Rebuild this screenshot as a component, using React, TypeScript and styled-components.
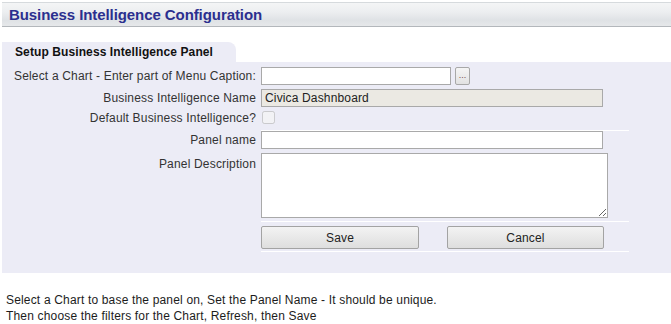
import React from "react";
import styled, { createGlobalStyle } from "styled-components";

const Global = createGlobalStyle`
  html, body { margin: 0; padding: 0; background: #ffffff; }
  body { font-family: Arial, "Liberation Sans", sans-serif; font-size: 12px; color: #222; }
`;

const Page = styled.div`
  padding: 2px 0 0 2px;
  width: 669px;
`;

const Header = styled.div`
  height: 23px;
  border-top: 1px solid #d6dadd;
  border-bottom: 1px solid #b3b7bb;
  background: linear-gradient(to bottom, #f4f5f6 0%, #eceef0 40%, #dfe2e5 75%, #e6e8ea 100%);
  display: flex;
  align-items: center;
  padding-left: 7px;
`;

const Title = styled.h1`
  margin: 0;
  font-size: 15px;
  font-weight: bold;
  letter-spacing: -0.08px;
  color: #2b2f8f;
  font-family: Arial, "Liberation Sans", sans-serif;
`;

const TabRow = styled.div`
  margin-top: 15px;
  display: flex;
`;

const Tab = styled.div`
  width: 234px;
  height: 20px;
  background: #ececf6;
  border-top-right-radius: 8px;
  box-sizing: border-box;
  padding-left: 13px;
  display: flex;
  align-items: center;
  font-weight: bold;
  font-size: 12px;
  letter-spacing: 0.1px;
  color: #111;
`;

const Panel = styled.div`
  background: #ececf6;
  height: 211px;
  box-sizing: border-box;
  padding-top: 3px;
`;

const Row = styled.div<{ $pt: number; $pb: number; $line?: boolean }>`
  display: grid;
  grid-template-columns: 254px 368px;
  column-gap: 5px;
  & > div:last-child {
    padding-top: ${(p) => p.$pt}px;
    padding-bottom: ${(p) => p.$pb}px;
    border-bottom: ${(p) => (p.$line ? "1px solid #ffffff" : "0")};
    display: flex;
    align-items: flex-start;
  }
`;

const Label = styled.div<{ $pt: number }>`
  text-align: right;
  padding-top: ${(p) => p.$pt}px;
  line-height: 18px;
  color: #333;
  letter-spacing: 0.18px;
  white-space: nowrap;
`;

const Field = styled.div``;

const TextInput = styled.input<{ $w: number }>`
  box-sizing: border-box;
  width: ${(p) => p.$w}px;
  height: 18px;
  margin: 0;
  padding: 0 3px;
  border: 1px solid #a9a9a9;
  background: #ffffff;
  font-family: Arial, "Liberation Sans", sans-serif;
  font-size: 12px;
  letter-spacing: 0.15px;
  color: #222;
  outline: none;
  &:disabled {
    background: #ebe9e3;
    color: #222;
  }
`;

const DotsButton = styled.button`
  box-sizing: border-box;
  width: 15px;
  height: 18px;
  margin: 0 0 0 4px;
  padding: 0 0 4px 0;
  border: 1px solid #a8a8a8;
  border-radius: 2px;
  background: linear-gradient(#f5f5f5, #e2e2e2);
  font-size: 9px;
  line-height: 9px;
  color: #7a4a4a;
  font-family: Arial, "Liberation Sans", sans-serif;
  display: flex;
  align-items: flex-end;
  justify-content: center;
`;

const Check = styled.input`
  width: 13px;
  height: 13px;
  margin: 0 0 0 1px;
`;

const Area = styled.textarea`
  box-sizing: border-box;
  width: 347px;
  height: 65px;
  margin: 0;
  border: 1px solid #a9a9a9;
  background: #fff;
  font-family: Arial, "Liberation Sans", sans-serif;
  font-size: 12px;
  outline: none;
  display: block;
`;

const Buttons = styled.div`
  display: flex;
  gap: 28px;
`;

const Btn = styled.button<{ $w: number }>`
  box-sizing: border-box;
  width: ${(p) => p.$w}px;
  height: 23px;
  margin: 0;
  border: 1px solid #a3a3a3;
  border-radius: 2px;
  background: linear-gradient(#f3f3f3, #dedede);
  font-family: Arial, "Liberation Sans", sans-serif;
  font-size: 12px;
  letter-spacing: 0.15px;
  color: #222;
  padding: 0;
`;

const Footer = styled.div`
  margin-top: 19px;
  padding-left: 4px;
  line-height: 16px;
  font-size: 12px;
  letter-spacing: 0.17px;
  color: #1c1c1c;
`;

export default function App() {
  return (
    <Page>
      <Global />
      <Header>
        <Title>Business Intelligence Configuration</Title>
      </Header>
      <TabRow>
        <Tab>Setup Business Intelligence Panel</Tab>
      </TabRow>
      <Panel>
        <Row $pt={2} $pb={2}>
          <Label $pt={2}>Select a Chart - Enter part of Menu Caption:</Label>
          <Field>
            <TextInput $w={190} type="text" />
            <DotsButton>...</DotsButton>
          </Field>
        </Row>
        <Row $pt={2} $pb={2}>
          <Label $pt={2}>Business Intelligence Name</Label>
          <Field>
            <TextInput $w={342} type="text" disabled value="Civica Dashnboard" readOnly />
          </Field>
        </Row>
        <Row $pt={2} $pb={6} $line>
          <Label $pt={0}>Default Business Intelligence?</Label>
          <Field>
            <Check type="checkbox" disabled />
          </Field>
        </Row>
        <Row $pt={0} $pb={4}>
          <Label $pt={0}>Panel name</Label>
          <Field>
            <TextInput $w={342} type="text" />
          </Field>
        </Row>
        <Row $pt={0} $pb={3} $line>
          <Label $pt={2}>Panel Description</Label>
          <Field>
            <Area />
          </Field>
        </Row>
        <Row $pt={4} $pb={2} $line>
          <Label $pt={0}></Label>
          <Field>
            <Buttons>
              <Btn $w={158}>Save</Btn>
              <Btn $w={157}>Cancel</Btn>
            </Buttons>
          </Field>
        </Row>
      </Panel>
      <Footer>
        Select a Chart to base the panel on, Set the Panel Name - It should be unique.
        <br />
        Then choose the filters for the Chart, Refresh, then Save
      </Footer>
    </Page>
  );
}
